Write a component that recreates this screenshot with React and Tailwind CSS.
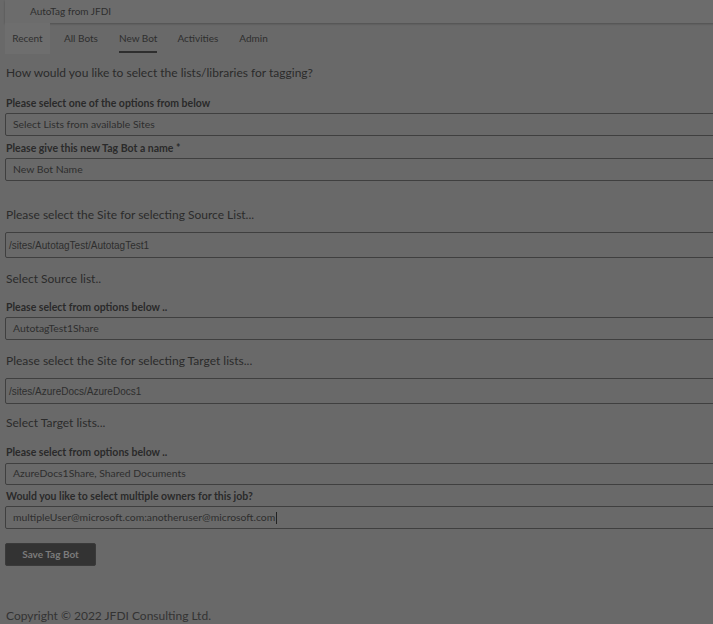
import React from "react";

const font = { fontFamily: 'Lato, "Noto Sans", sans-serif' };

function Label({ children, className = "" }) {
  return (
    <div className={"text-[10.5px] font-bold leading-[14px] text-[#2a2a2a] " + className}>{children}</div>
  );
}

function Box({ children, className = "", arial = false }) {
  return (
    <div
      className={
        "w-[760px] border border-[#3f3f3f] rounded-[2px] flex items-center text-[10.4px] text-[#2e2e2e] " +
        className
      }
      style={arial ? { fontFamily: '"Liberation Sans", Arial, sans-serif', fontSize: "10px" } : undefined}
    >
      {children}
    </div>
  );
}

function Heading({ children, className = "" }) {
  return <div className={"text-[12px] leading-[18px] text-[#2b2b2b] " + className}>{children}</div>;
}

export default function App() {
  return (
    <div className="w-[713px] h-[624px] overflow-hidden bg-[#696969] relative" style={font}>
      <div className="pl-[5px]">
        <div className="h-[23px] w-[760px] bg-[#6c6c6c] shadow-[0_1px_2px_rgba(0,0,0,0.25)] flex items-center pl-[25px] text-[10px] text-[#2e2e2e]">
          AutoTag from JFDI
        </div>
        <div className="flex h-[31px] items-stretch text-[10px] text-[#2e2e2e]">
          <div className="w-[45px] bg-[#6e6e6e] flex items-center justify-center">Recent</div>
          <div className="ml-[14px] flex items-center">All Bots</div>
          <div className="ml-[21px] flex items-center relative">
            New Bot
            <div className="absolute left-0 right-0 bottom-[1px] h-[2px] bg-[#2e2e2e]"></div>
          </div>
          <div className="ml-[20px] flex items-center">Activities</div>
          <div className="ml-[21px] flex items-center">Admin</div>
        </div>

        <Heading className="mt-[10px] pl-px">How would you like to select the lists/libraries for tagging?</Heading>
        <Label className="mt-[14px] pl-px">Please select one of the options from below</Label>
        <Box className="mt-[3px] h-[23px] pl-[7px]">Select Lists from available Sites</Box>
        <Label className="mt-[5px] pl-px">Please give this new Tag Bot a name *</Label>
        <Box className="mt-[3px] h-[23px] pl-[7px]">New Bot Name</Box>

        <Heading className="mt-[25px] pl-px">Please select the Site for selecting Source List...</Heading>
        <Box arial className="mt-[8px] h-[26px] pl-[3px]">/sites/AutotagTest/AutotagTest1</Box>
        <Heading className="mt-[12px] pl-px">Select Source list..</Heading>
        <Label className="mt-[12px] pl-px">Please select from options below ..</Label>
        <Box className="mt-[3px] h-[23px] pl-[7px]">AutotagTest1Share</Box>

        <Heading className="mt-[12px] pl-px">Please select the Site for selecting Target lists...</Heading>
        <Box arial className="mt-[8px] h-[26px] pl-[3px]">/sites/AzureDocs/AzureDocs1</Box>
        <Heading className="mt-[10px] pl-px">Select Target lists...</Heading>
        <Label className="mt-[13px] pl-px">Please select from options below ..</Label>
        <Box className="mt-[4px] h-[22px] pl-[7px]">AzureDocs1Share, Shared Documents</Box>
        <Label className="mt-[4px] pl-px">Would you like to select multiple owners for this job?</Label>
        <Box className="mt-[3px] h-[23px] pl-[7px]">
          multipleUser@microsoft.com:anotheruser@microsoft.com
          <span className="inline-block w-px h-[12px] bg-[#222] ml-px"></span>
        </Box>

        <button className="mt-[14px] w-[91px] h-[23px] bg-[#333333] rounded-[2px] text-[10px] font-bold text-[#7b7b7b] flex items-center justify-center border border-[#3a3a3a]">
          Save Tag Bot
        </button>

        <Heading className="mt-[41px] pl-px text-[#333]">Copyright © 2022 JFDI Consulting Ltd.</Heading>
      </div>
    </div>
  );
}
